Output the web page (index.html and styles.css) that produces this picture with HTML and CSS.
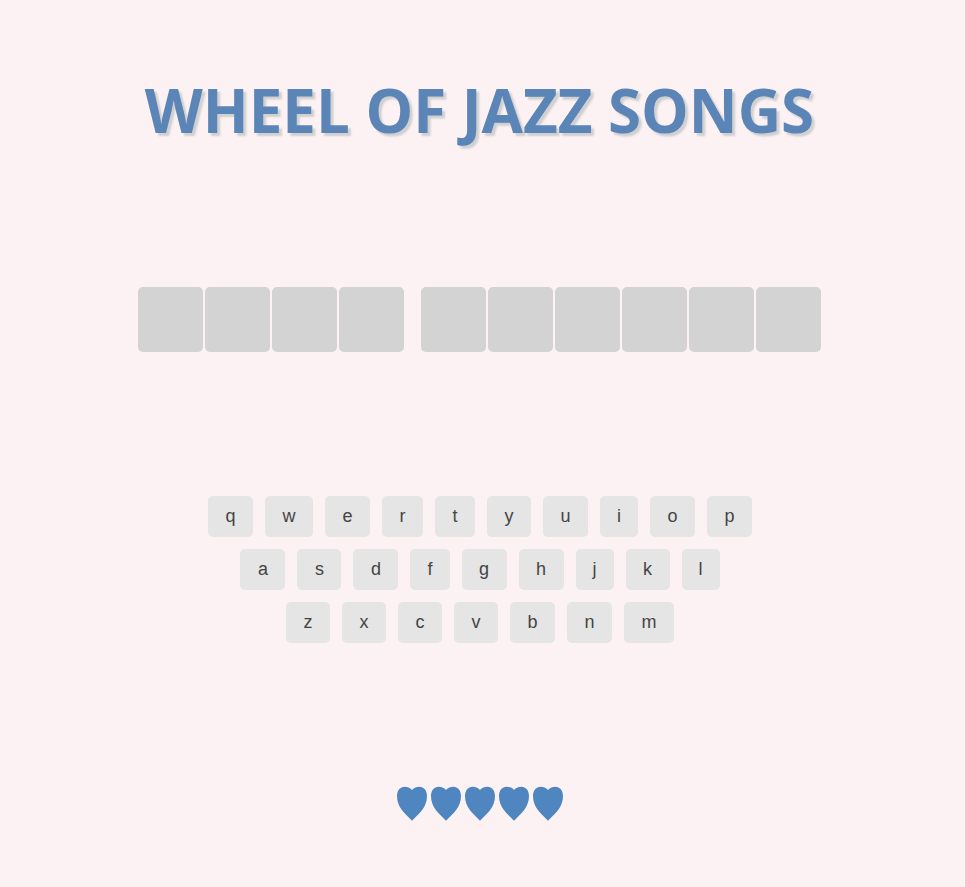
FILE: index.html
```html
<!DOCTYPE html>
<html lang="en">

<head>
    <meta charset="UTF-8">
    <meta name="viewport" content="width=device-width, initial-scale=1.0">
    <title>Wheel of Jazz Songs</title>
    <link rel="stylesheet" href="styles.css">
</head>

<body>
    <h1 class="title">WHEEL OF JAZZ SONGS</h1>

    <div class="board">
        <div class="word">
            <div class="tile"></div>
            <div class="tile"></div>
            <div class="tile"></div>
            <div class="tile"></div>
        </div>
        <div class="word">
            <div class="tile"></div>
            <div class="tile"></div>
            <div class="tile"></div>
            <div class="tile"></div>
            <div class="tile"></div>
            <div class="tile"></div>
        </div>
    </div>

    <div class="keyboard">
        <div class="key-row">
            <button class="key">q</button>
            <button class="key">w</button>
            <button class="key">e</button>
            <button class="key">r</button>
            <button class="key">t</button>
            <button class="key">y</button>
            <button class="key">u</button>
            <button class="key key-thin">i</button>
            <button class="key">o</button>
            <button class="key">p</button>
        </div>
        <div class="key-row">
            <button class="key">a</button>
            <button class="key">s</button>
            <button class="key">d</button>
            <button class="key key-thin">f</button>
            <button class="key">g</button>
            <button class="key">h</button>
            <button class="key key-thin">j</button>
            <button class="key">k</button>
            <button class="key key-thin">l</button>
        </div>
        <div class="key-row">
            <button class="key">z</button>
            <button class="key">x</button>
            <button class="key">c</button>
            <button class="key">v</button>
            <button class="key">b</button>
            <button class="key">n</button>
            <button class="key">m</button>
        </div>
    </div>

    <div class="lives">
        <svg class="heart" viewBox="0 0 30 35"><path d="M15 34.800C11.500 31 7.500 27.500 4.500 23.500 2 20 0 15.500 0 10 0 4.300 3.300 .7 7.500 .7 11 .7 13.700 2 15 4 16.300 2 19 .7 22.500 .7 26.700 .7 30 4.300 30 10 30 15.500 28 20 25.500 23.500 22.500 27.500 18.500 31 15 34.800z"/></svg>
        <svg class="heart" viewBox="0 0 30 35"><path d="M15 34.800C11.500 31 7.500 27.500 4.500 23.500 2 20 0 15.500 0 10 0 4.300 3.300 .7 7.500 .7 11 .7 13.700 2 15 4 16.300 2 19 .7 22.500 .7 26.700 .7 30 4.300 30 10 30 15.500 28 20 25.500 23.500 22.500 27.500 18.500 31 15 34.800z"/></svg>
        <svg class="heart" viewBox="0 0 30 35"><path d="M15 34.800C11.500 31 7.500 27.500 4.500 23.500 2 20 0 15.500 0 10 0 4.300 3.300 .7 7.500 .7 11 .7 13.700 2 15 4 16.300 2 19 .7 22.500 .7 26.700 .7 30 4.300 30 10 30 15.500 28 20 25.500 23.500 22.500 27.500 18.500 31 15 34.800z"/></svg>
        <svg class="heart" viewBox="0 0 30 35"><path d="M15 34.800C11.500 31 7.500 27.500 4.500 23.500 2 20 0 15.500 0 10 0 4.300 3.300 .7 7.500 .7 11 .7 13.700 2 15 4 16.300 2 19 .7 22.500 .7 26.700 .7 30 4.300 30 10 30 15.500 28 20 25.500 23.500 22.500 27.500 18.500 31 15 34.800z"/></svg>
        <svg class="heart" viewBox="0 0 30 35"><path d="M15 34.800C11.500 31 7.500 27.500 4.500 23.500 2 20 0 15.500 0 10 0 4.300 3.300 .7 7.500 .7 11 .7 13.700 2 15 4 16.300 2 19 .7 22.500 .7 26.700 .7 30 4.300 30 10 30 15.500 28 20 25.500 23.500 22.500 27.500 18.500 31 15 34.800z"/></svg>
    </div>
</body>

</html>
```

FILE: styles.css
```css
html {
    font-family: "Liberation Sans", Arial, sans-serif;
}

body {
    background-color: #fcf1f3;
    margin: 0;
    min-height: 887px;
    padding-right: 6px;
}

.title {
    color: #5b85b7;
    font-family: "Open Sans", sans-serif;
    font-size: 60px;
    font-weight: 700;
    line-height: 82px;
    margin: 0;
    padding-top: 69px;
    text-align: center;
    text-shadow: 3px 3px 2px #d0d0d0;
}

.board {
    display: flex;
    justify-content: center;
    gap: 17px;
    margin-top: 136px;
}

.word {
    display: flex;
    gap: 2px;
}

.tile {
    background-color: #d3d3d3;
    border-radius: 5px;
    height: 65px;
    width: 65px;
}

.keyboard {
    display: flex;
    flex-direction: column;
    gap: 12px;
    margin-top: 144px;
    padding-left: 1px;
}

.key-row {
    display: flex;
    justify-content: center;
    gap: 12px;
}

.key {
    background-color: #e5e5e5;
    border: 0;
    border-radius: 5px;
    color: #444444;
    font-family: inherit;
    font-size: 18px;
    height: 41px;
    line-height: 21px;
    margin: 0;
    padding: 0 17.5px;
}

.key-thin {
    padding: 0 17px;
}

.lives {
    display: flex;
    justify-content: center;
    gap: 4px;
    margin-top: 143px;
}

.heart {
    display: block;
    fill: #4f86bf;
    height: 35px;
    width: 30px;
}
```
